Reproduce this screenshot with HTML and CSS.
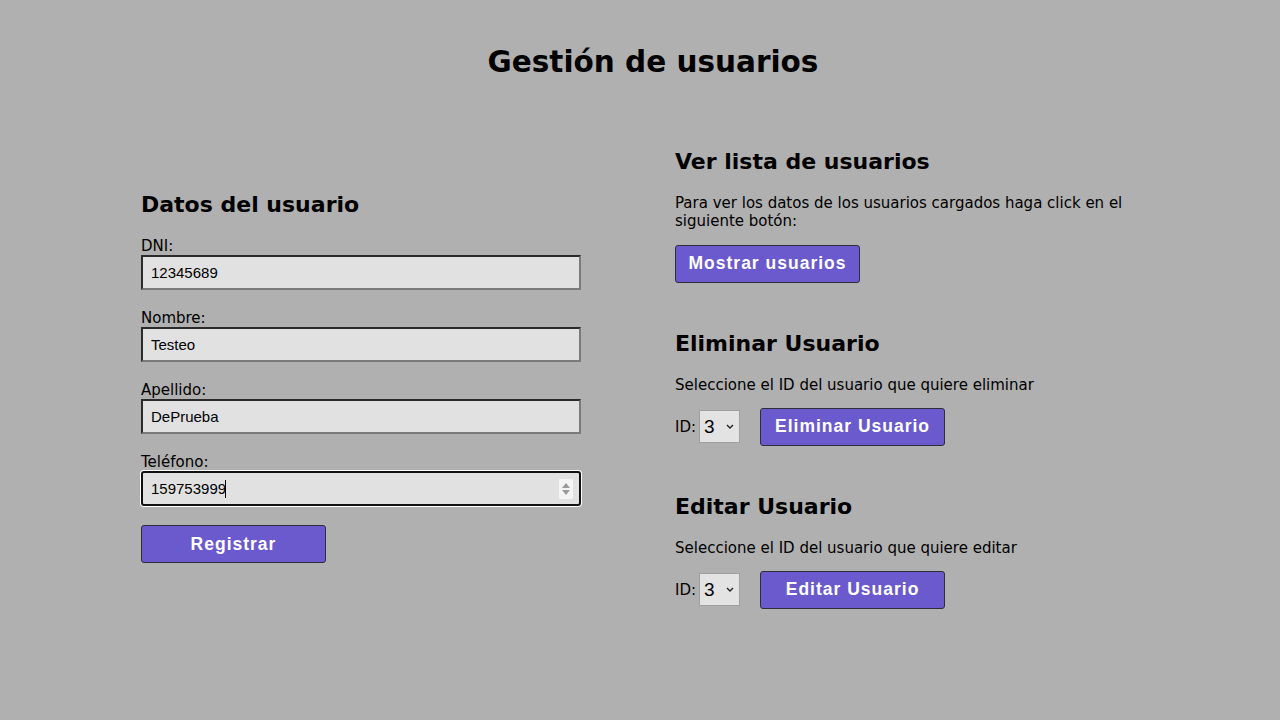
FILE: index.html
```html
<!DOCTYPE html>
<html lang="es">
<head>
<meta charset="utf-8">
<title>Gestión de usuarios</title>
<link rel="stylesheet" href="styles.css">
</head>
<body>
<h1 class="title">Gestión de usuarios</h1>
<main class="layout">
  <section class="col-left">
    <h2 class="section-title">Datos del usuario</h2>
    <form class="user-form">
      <div class="field">
        <label class="field-label" for="dni">DNI:</label>
        <input class="field-input" id="dni" type="text" value="12345689">
      </div>
      <div class="field">
        <label class="field-label" for="nombre">Nombre:</label>
        <input class="field-input" id="nombre" type="text" value="Testeo">
      </div>
      <div class="field">
        <label class="field-label" for="apellido">Apellido:</label>
        <input class="field-input" id="apellido" type="text" value="DePrueba">
      </div>
      <div class="field">
        <label class="field-label" for="telefono">Teléfono:</label>
        <div class="input-wrap">
          <input class="field-input focused" id="telefono" type="text" value="159753999">
          <span class="caret"></span>
          <span class="spinner">
            <svg width="12" height="18" viewBox="0 0 12 18"><path d="M6 3 L10 8 L2 8 Z" fill="#9a9a9a"/><path d="M2 10 L10 10 L6 15 Z" fill="#9a9a9a"/></svg>
          </span>
        </div>
      </div>
      <button class="btn" type="button">Registrar</button>
    </form>
  </section>
  <section class="col-right">
    <div class="block">
      <h2 class="section-title">Ver lista de usuarios</h2>
      <p class="text">Para ver los datos de los usuarios cargados haga click en el siguiente botón:</p>
      <button class="btn" type="button">Mostrar usuarios</button>
    </div>
    <div class="block">
      <h2 class="section-title">Eliminar Usuario</h2>
      <p class="text">Seleccione el ID del usuario que quiere eliminar</p>
      <div class="id-row">
        <label class="id-label" for="id-del">ID:</label>
        <span class="select-wrap">
          <select class="id-select" id="id-del"><option>3</option></select>
          <svg class="chevron" width="8" height="5" viewBox="0 0 8 5"><path d="M1 1 L4 4 L7 1" fill="none" stroke="#222" stroke-width="1.4"/></svg>
        </span>
        <button class="btn" type="button">Eliminar Usuario</button>
      </div>
    </div>
    <div class="block">
      <h2 class="section-title">Editar Usuario</h2>
      <p class="text">Seleccione el ID del usuario que quiere editar</p>
      <div class="id-row">
        <label class="id-label" for="id-edit">ID:</label>
        <span class="select-wrap">
          <select class="id-select" id="id-edit"><option>3</option></select>
          <svg class="chevron" width="8" height="5" viewBox="0 0 8 5"><path d="M1 1 L4 4 L7 1" fill="none" stroke="#222" stroke-width="1.4"/></svg>
        </span>
        <button class="btn" type="button">Editar Usuario</button>
      </div>
    </div>
  </section>
</main>
</body>
</html>
```
FILE: styles.css
```css
html, body {
  margin: 0;
  padding: 0;
}
body {
  background: #b0b0b0;
  font-family: "DejaVu Sans", Verdana, sans-serif;
  color: #000;
  width: 1280px;
  height: 720px;
  overflow: hidden;
}
.title {
  margin: 0;
  padding: 44px 0 0 26px;
  text-align: center;
  font-size: 29.5px;
  font-weight: bold;
  line-height: 36px;
}
.layout {
  display: grid;
  grid-template-columns: 440px 1fr;
  column-gap: 94px;
  align-items: center;
  margin: 0 141px;
  height: 596px;
}
.section-title {
  margin: 0;
  font-size: 22px;
  font-weight: bold;
  line-height: 28px;
}
.col-left .section-title {
  margin-bottom: 18px;
}
.col-left {
  margin-top: -2px;
}
.field {
  margin-bottom: 19px;
}
.field-label {
  display: block;
  font-size: 15px;
  line-height: 18px;
}
.field-input {
  display: block;
  box-sizing: border-box;
  width: 440px;
  height: 35px;
  margin: 0;
  padding: 0 8px;
  background: #e1e1e1;
  border-style: solid;
  border-width: 2px;
  border-color: #2a2a2a #7a7a7a #7a7a7a #2a2a2a;
  font-family: "Liberation Sans", Arial, sans-serif;
  font-size: 15px;
  color: #000;
  outline: none;
}
.field-input.focused {
  border-color: #111;
  border-radius: 3px;
  box-shadow: 0 0 0 1px #fff;
}
.input-wrap {
  position: relative;
  width: 440px;
}
.caret {
  position: absolute;
  left: 84px;
  top: 9px;
  width: 1px;
  height: 18px;
  background: #000;
}
.spinner {
  position: absolute;
  right: 8px;
  top: 8px;
  width: 14px;
  height: 20px;
  background: #f4f4f4;
  display: flex;
  align-items: center;
  justify-content: center;
}
.btn {
  display: block;
  box-sizing: border-box;
  width: 185px;
  height: 38px;
  margin: 0;
  padding: 0;
  background: #6a5acd;
  color: #fff;
  border: 1px solid #2e2e3a;
  border-radius: 3px;
  font-family: "Liberation Sans", Arial, sans-serif;
  font-size: 17.5px;
  font-weight: bold;
  letter-spacing: 1px;
  cursor: pointer;
}
.col-right {
  display: flex;
  flex-direction: column;
  gap: 47px;
}
.text {
  margin: 18px 0 15px;
  font-size: 15px;
  line-height: 18px;
  max-width: 460px;
}
.id-row {
  display: flex;
  align-items: center;
  margin-top: -1px;
}
.id-label {
  font-size: 15px;
  margin-right: 3px;
}
.select-wrap {
  position: relative;
  display: block;
  width: 41px;
  height: 33px;
  margin-right: 20px;
}
.id-select {
  -webkit-appearance: none;
  appearance: none;
  box-sizing: border-box;
  width: 41px;
  height: 33px;
  margin: 0;
  padding: 0 0 0 4px;
  background: #e3e3e3;
  border: 1px solid #a0a0a0;
  border-radius: 0;
  font-family: "Liberation Sans", Arial, sans-serif;
  font-size: 19px;
  color: #000;
}
.chevron {
  position: absolute;
  right: 6px;
  top: 14px;
  pointer-events: none;
}
```
